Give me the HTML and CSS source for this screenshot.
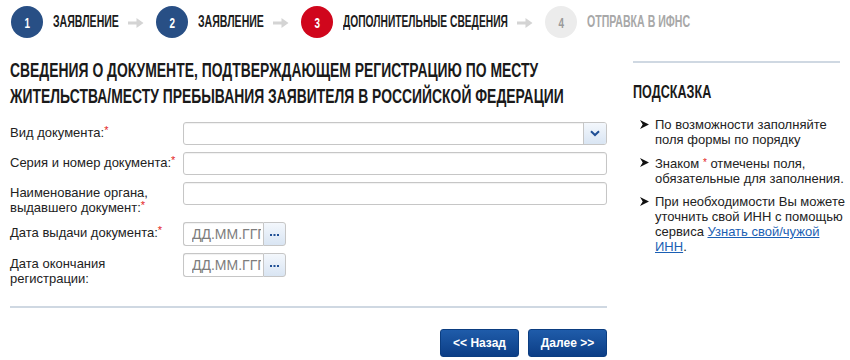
FILE: index.html
```html
<!DOCTYPE html>
<html lang="ru">
<head>
<meta charset="UTF-8" />
<meta name="viewport" content="width=device-width, initial-scale=1" />
<title>Сведения о документе</title>
<link rel="stylesheet" href="styles.css">
</head>
<body>

  <ol class="steps">
    <li class="step step-done">
      <span class="step-num"><span class="cond">1</span></span>
      <span class="step-name step-name-1"><span class="cond">Заявление</span></span>
    </li>
    <li class="step-arrow"><svg width="16" height="12" viewBox="0 0 16 12"><path d="M0 4.5h8.5V1L15.5 6 8.5 11V7.5H0z" fill="#d4d4d4"/></svg></li>
    <li class="step step-done">
      <span class="step-num"><span class="cond">2</span></span>
      <span class="step-name step-name-2"><span class="cond">Заявление</span></span>
    </li>
    <li class="step-arrow"><svg width="16" height="12" viewBox="0 0 16 12"><path d="M0 4.5h8.5V1L15.5 6 8.5 11V7.5H0z" fill="#d4d4d4"/></svg></li>
    <li class="step step-current">
      <span class="step-num"><span class="cond">3</span></span>
      <span class="step-name step-name-3"><span class="cond">Дополнительные сведения</span></span>
    </li>
    <li class="step-arrow"><svg width="16" height="12" viewBox="0 0 16 12"><path d="M0 4.5h8.5V1L15.5 6 8.5 11V7.5H0z" fill="#d4d4d4"/></svg></li>
    <li class="step step-next">
      <span class="step-num"><span class="cond">4</span></span>
      <span class="step-name step-name-4"><span class="cond">Отправка в ИФНС</span></span>
    </li>
  </ol>

  <div class="layout">
    <div class="main">
      <h1 class="title"><span class="cond">Сведения о документе, подтверждающем регистрацию по месту<br>жительства/месту пребывания заявителя в Российской Федерации</span></h1>

      <form class="form">
        <div class="row">
          <label class="label">Вид документа:<span class="req">*</span></label>
          <div class="select">
            <span class="select-value"></span>
            <span class="select-btn">
              <svg width="10" height="7" viewBox="0 0 10 7"><path d="M1 1.2l4 3.8 4-3.8" fill="none" stroke="#1f4f95" stroke-width="2"/></svg>
            </span>
          </div>
        </div>
        <div class="row">
          <label class="label">Серия и номер документа:<span class="req">*</span></label>
          <input class="input" type="text">
        </div>
        <div class="row">
          <label class="label">Наименование органа,<br>выдавшего документ:<span class="req">*</span></label>
          <input class="input" type="text">
        </div>
        <div class="row">
          <label class="label">Дата выдачи документа:<span class="req">*</span></label>
          <div class="date">
            <input class="date-input" type="text" placeholder="ДД.ММ.ГГГГ">
            <span class="date-btn">
              <svg width="9" height="3" viewBox="0 0 9 3"><rect x="0" y="0" width="2" height="2" fill="#1f4f95"/><rect x="3.5" y="0" width="2" height="2" fill="#1f4f95"/><rect x="7" y="0" width="2" height="2" fill="#1f4f95"/></svg>
            </span>
          </div>
        </div>
        <div class="row">
          <label class="label">Дата окончания<br>регистрации:</label>
          <div class="date">
            <input class="date-input" type="text" placeholder="ДД.ММ.ГГГГ">
            <span class="date-btn">
              <svg width="9" height="3" viewBox="0 0 9 3"><rect x="0" y="0" width="2" height="2" fill="#1f4f95"/><rect x="3.5" y="0" width="2" height="2" fill="#1f4f95"/><rect x="7" y="0" width="2" height="2" fill="#1f4f95"/></svg>
            </span>
          </div>
        </div>
      </form>

      <div class="sep"></div>

      <div class="actions">
        <button class="btn" type="button">&lt;&lt; Назад</button>
        <button class="btn" type="button">Далее &gt;&gt;</button>
      </div>
    </div>

    <aside class="hint">
      <h2 class="hint-title"><span class="cond">Подсказка</span></h2>
      <ul class="hint-list">
        <li>По возможности заполняйте<br>поля формы по порядку</li>
        <li>Знаком <span class="star">*</span> отмечены поля,<br>обязательные для заполнения.</li>
        <li>При необходимости Вы можете<br>уточнить свой ИНН с помощью<br>сервиса <a href="#">Узнать свой/чужой<br>ИНН</a>.</li>
      </ul>
    </aside>
  </div>

</body>
</html>
```

FILE: styles.css
```css
body {
  margin: 0;
  padding: 0 10px;
  font-family: "Liberation Sans", Arial, sans-serif;
  font-size: 13px;
  color: #222;
  background: #fff;
}

/* узкий жирный шрифт заголовков */
.cond {
  display: inline-block;
  font-family: "Liberation Sans", Arial, sans-serif;
  font-weight: bold;
  text-transform: uppercase;
  white-space: nowrap;
  transform: scaleX(0.66);
  transform-origin: 0 50%;
}

/* шаги */
.steps {
  display: flex;
  align-items: center;
  list-style: none;
  margin: 0;
  padding: 4px 0 0 1px;
  height: 36px;
}
.step {
  display: flex;
  align-items: center;
  gap: 10px;
}
.step-num {
  width: 32px;
  height: 32px;
  border-radius: 50%;
  display: flex;
  align-items: center;
  justify-content: center;
  color: #fff;
  font-size: 15px;
}
.step-num .cond {
  transform-origin: 50% 50%;
}
.step-name {
  font-size: 16px;
  color: #1c1c1c;
}
.step-name-1, .step-name-2 { width: 66px; }
.step-name-3 { width: 165px; }
.step-name-4 { width: 106px; }
.step-name-3 .cond { transform: scaleX(0.64); }
.step-done .step-num { background: #284f85; }
.step-current .step-num { background: #d0061c; }
.step-next .step-num { background: #ececec; color: #9a9a9a; }
.step-next .step-name { color: #a8a8a8; }
.step-arrow {
  display: flex;
  margin: 2px 12px 0 9px;
}

/* колонки */
.layout {
  display: flex;
  gap: 26px;
}
.main {
  width: 597px;
}
.hint {
  width: 207px;
  margin-top: 21px;
  border-top: 2px solid #cfd8e2;
}

.title {
  margin: 17px 0 13px;
  font-size: 20px;
  line-height: 26px;
  font-weight: bold;
  color: #1a1a1a;
}
.title .cond {
  transform: scaleX(0.695);
}

/* форма */
.form {
  margin: 0;
}
.row {
  display: flex;
  align-items: flex-start;
  margin-bottom: 7px;
}
.label {
  width: 173px;
  flex: none;
  padding-top: 3px;
  line-height: 15px;
  color: #222;
}
.req {
  color: #e3231b;
  font-size: 11px;
  vertical-align: 3px;
  line-height: 0;
}
.input, .select, .date-input {
  box-sizing: border-box;
  height: 23px;
  border: 1px solid #c6c6c6;
  border-radius: 3px;
  background: #fff;
  box-shadow: inset 0 1px 1px rgba(0, 0, 0, 0.06);
  font: 13px "Liberation Sans", Arial, sans-serif;
}
.input {
  width: 424px;
  padding: 0 6px;
}
.select {
  width: 424px;
  display: flex;
  overflow: hidden;
}
.select-value {
  flex: 1;
}
.select-btn, .date-btn {
  display: flex;
  align-items: center;
  justify-content: center;
  background: linear-gradient(#f3f7fc, #d9e5f3);
}
.select-btn {
  width: 22px;
  border-left: 1px solid #c6c6c6;
}
.date {
  display: flex;
  height: 24px;
}
.date-input {
  width: 80px;
  height: 24px;
  padding: 0 2px 0 8px;
  border-radius: 3px 0 0 3px;
  border-right: none;
  font-size: 14px;
}
.date-input::placeholder {
  color: #7d7d7d;
}
.date-btn {
  box-sizing: border-box;
  width: 23px;
  border: 1px solid #c6c6c6;
  border-radius: 0 3px 3px 0;
}
.date-btn svg {
  margin-top: 2px;
}

.sep {
  margin-top: 20px;
  height: 2px;
  background: #cfd8e2;
}

.actions {
  display: flex;
  justify-content: flex-end;
  gap: 9px;
  margin-top: 21px;
}
.btn {
  width: 79px;
  height: 28px;
  border: 1px solid #0b3d80;
  border-radius: 3px;
  background: linear-gradient(#1f5caa, #0c3e86);
  color: #fff;
  font: bold 12px "Liberation Sans", Arial, sans-serif;
  cursor: pointer;
}

/* подсказка */
.hint-title {
  margin: 18px 0 14px;
  font-size: 18px;
  line-height: 22px;
  color: #1a1a1a;
}
.hint-title .cond {
  transform: scaleX(0.7);
}
.hint-list {
  list-style: none;
  margin: 0 -12px 0 0;
  padding: 0 0 0 22px;
  line-height: 15px;
  white-space: nowrap;
}
.hint-list li {
  position: relative;
  margin-bottom: 8px;
}
.hint-list li::before {
  content: "";
  position: absolute;
  left: -15px;
  top: 3px;
  width: 9px;
  height: 9px;
  background: #111;
  clip-path: polygon(0 0, 100% 50%, 0 100%, 30% 50%);
}
.star {
  color: #e3231b;
  font-size: 10px;
  vertical-align: 2px;
}
.hint-list a {
  color: #1a5fb4;
}
```
